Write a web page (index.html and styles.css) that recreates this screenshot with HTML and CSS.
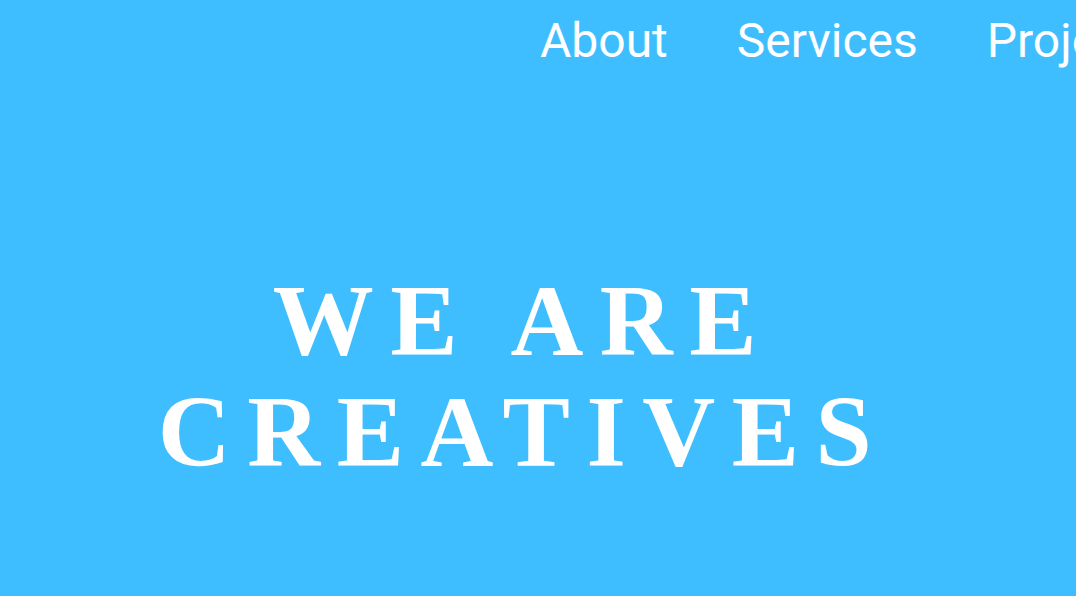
FILE: index.html
```html
<!DOCTYPE html>
<html lang="en">
<head>
<meta charset="utf-8">
<title>We Are Creatives</title>
<link rel="stylesheet" href="styles.css">
</head>
<body>
<header class="site-header">
  <nav class="main-nav">
    <a class="nav-link" href="#about">About</a>
    <a class="nav-link" href="#services">Services</a>
    <a class="nav-link" href="#projects">Projects</a>
    <a class="nav-link" href="#contact">Contact</a>
  </nav>
</header>
<main class="hero">
  <h1 class="hero-title">
    <span class="hero-line">WE ARE</span>
    <span class="hero-line">CREATIVES</span>
  </h1>
</main>
</body>
</html>
```

FILE: styles.css
```css
html, body {
  margin: 0;
  padding: 0;
}

body {
  width: 1076px;
  height: 596px;
  overflow: hidden;
  background: #3fbeff;
  color: #ffffff;
}

.site-header {
  padding-top: 13px;
  padding-left: 540px;
}

.main-nav {
  display: flex;
  gap: 69px;
  white-space: nowrap;
}

.nav-link {
  font-family: Roboto, "Noto Sans", sans-serif;
  font-weight: 400;
  font-size: 48px;
  line-height: 56px;
  color: #ffffff;
  text-decoration: none;
}

.hero {
  padding-top: 197px;
}

.hero-title {
  margin: 0;
  padding-right: 30px;
  font-family: "Liberation Serif", "Times New Roman", serif;
  font-weight: 700;
  font-size: 101px;
  line-height: 111px;
  letter-spacing: 16.5px;
  text-align: center;
}

.hero-line {
  display: block;
}
```
